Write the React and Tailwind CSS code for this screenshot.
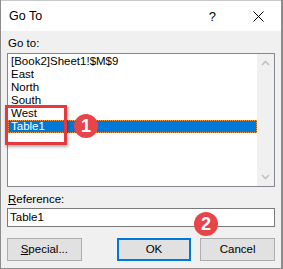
const items = ["[Book2]Sheet1!$M$9", "East", "North", "South", "West", "Table1"];

const Badge = ({ n, className }) => (
  <div
    className={`absolute w-[24px] h-[24px] rounded-full bg-[#e8454a] text-white flex items-center justify-center text-[18px] leading-none font-bold ${className}`}
  >
    {n}
  </div>
);

export default function App() {
  return (
    <div className="relative w-[283px] h-[269px] bg-[#f0f0f0] border-l border-r-2 border-b border-[#8c8c8c] flex flex-col font-['Liberation_Sans',Arial,sans-serif] text-[11.5px] text-black leading-[13px]">
      {/* title bar */}
      <div className="h-[31px] bg-white flex items-center pl-[8px] pr-[17px] shrink-0 border-t border-[#c8c8c8]">
        <span className="text-[12.5px]">Go To</span>
        <span className="ml-auto mr-[37px] text-[13px]">?</span>
        <svg width="11" height="11" viewBox="0 0 11 11">
          <path d="M0.5 0.5 L10.5 10.5 M10.5 0.5 L0.5 10.5" stroke="#000" strokeWidth="1" />
        </svg>
      </div>

      <div className="flex flex-col px-[6px] pt-[6px]">
        <div className="h-[13px] pl-[1px]">Go to:</div>
        <div className="mt-[3px] h-[134px] border border-[#828790] bg-white flex">
          <div className="flex-1 pt-[1px]">
            {items.map((it) => (
              <div
                key={it}
                className={`h-[13px] pl-[3px] ${
                  it === "Table1"
                    ? "bg-[#0078d7] text-white outline outline-1 outline-dotted outline-[#f0a050] -outline-offset-1"
                    : ""
                }`}
              >
                {it}
              </div>
            ))}
          </div>
          <div className="w-[17px] bg-[#f0f0f0] flex flex-col justify-between items-center py-[6px]">
            <svg width="9" height="6" viewBox="0 0 9 6">
              <path d="M1 5 L4.5 1.5 L8 5" fill="none" stroke="#c2c2c2" strokeWidth="1.6" />
            </svg>
            <svg width="9" height="6" viewBox="0 0 9 6">
              <path d="M1 1 L4.5 4.5 L8 1" fill="none" stroke="#c2c2c2" strokeWidth="1.6" />
            </svg>
          </div>
        </div>

        <div className="mt-[6px] h-[13px] pl-[1px]">
          <span className="underline">R</span>eference:
        </div>
        <div className="mt-[2px] h-[19px] border border-[#7a7a7a] bg-white flex items-center pl-[2px]">
          Table1
        </div>

        <div className="mt-[11px] flex">
          <button className="w-[75px] h-[23px] bg-[#e1e1e1] border border-[#adadad]">
            <span className="underline">S</span>pecial...
          </button>
          <button className="ml-[35px] w-[75px] h-[23px] bg-[#e1e1e1] border-2 border-[#0078d7]">
            OK
          </button>
          <button className="ml-[9px] w-[75px] h-[23px] bg-[#e1e1e1] border border-[#adadad]">
            Cancel
          </button>
        </div>
      </div>

      {/* annotations */}
      <div className="absolute left-[4px] top-[105px] w-[62px] h-[40px] border-[3px] border-[#e8383d] shadow-[1px_2px_3px_rgba(0,0,0,0.3)]" />
      <Badge n="1" className="left-[73px] top-[114px]" />
      <Badge n="2" className="left-[193px] top-[212px]" />
    </div>
  );
}
